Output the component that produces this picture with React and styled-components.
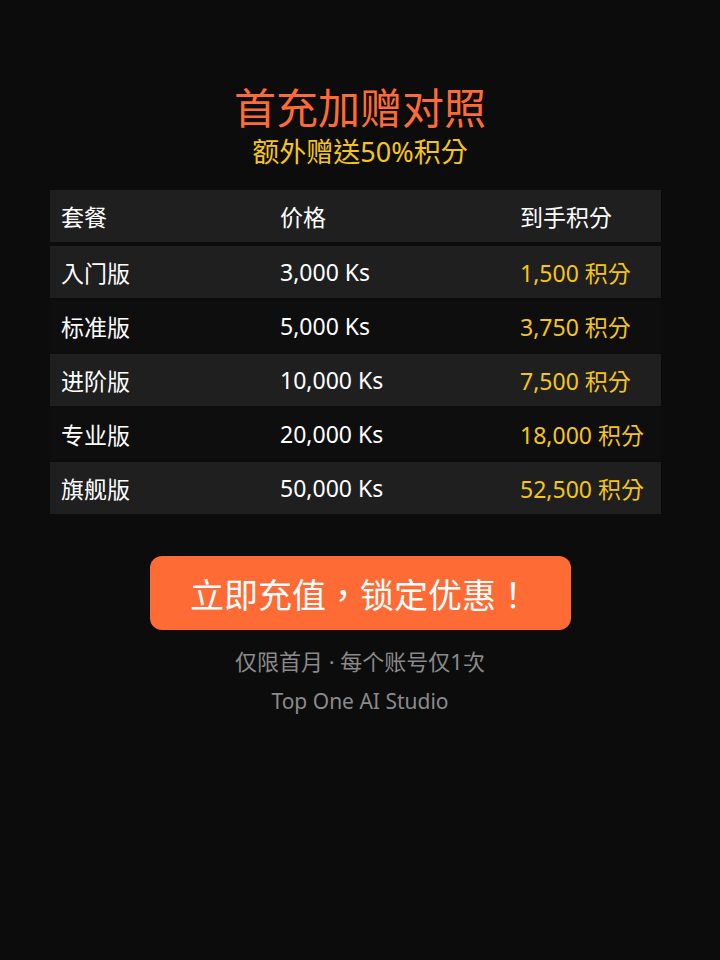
import styled, { createGlobalStyle } from "styled-components";

const GlobalStyle = createGlobalStyle`
  html, body {
    margin: 0;
    padding: 0;
    background: #0c0c0c;
  }
  body {
    font-family: "Noto Sans", "Noto Sans CJK TC", sans-serif;
  }
`;

const Page = styled.div`
  width: 720px;
  min-height: 960px;
  background: #0c0c0c;
  display: flex;
  flex-direction: column;
  align-items: center;
  padding-top: 80px;
  box-sizing: border-box;
`;

const Title = styled.h1`
  margin: 0;
  font-size: 42px;
  font-weight: 400;
  line-height: 56px;
  color: #ff6b35;
`;

const Subtitle = styled.div`
  margin-top: -1px;
  font-size: 27px;
  line-height: 34px;
  color: #f5c518;
`;

const Table = styled.div`
  width: 611px;
  margin: 21px 0 0 -9px;
  display: flex;
  flex-direction: column;
  gap: 2px;
`;

const Row = styled.div`
  display: grid;
  grid-template-columns: 219px 240px 1fr;
  height: 52px;
  align-items: center;
  background: ${(props) => (props.dark ? "#0e0e0e" : "#1f1f1f")};
  margin-bottom: ${(props) => (props.head ? "2px" : "0")};
`;

const Cell = styled.div`
  padding-left: 11px;
  font-size: 23px;
  color: ${(props) => (props.gold ? "#f5c518" : "#ffffff")};
  white-space: nowrap;
`;

const CtaButton = styled.button`
  margin-top: 42px;
  width: 421px;
  height: 74px;
  border: none;
  border-radius: 12px;
  background: #ff6b35;
  color: #ffffff;
  font-family: inherit;
  font-size: 34px;
  cursor: pointer;
`;

const Note = styled.div`
  margin-top: ${(props) => props.top || "0"};
  font-size: ${(props) => props.size || "21px"};
  line-height: 40px;
  color: #8a8a8a;
`;

const plans = [
  { name: "入门版", price: "3,000 Ks", points: "1,500 积分" },
  { name: "标准版", price: "5,000 Ks", points: "3,750 积分" },
  { name: "进阶版", price: "10,000 Ks", points: "7,500 积分" },
  { name: "专业版", price: "20,000 Ks", points: "18,000 积分" },
  { name: "旗舰版", price: "50,000 Ks", points: "52,500 积分" },
];

const App = () => {
  return (
    <>
      <GlobalStyle />
      <Page>
        <Title>首充加赠对照</Title>
        <Subtitle>额外赠送50%积分</Subtitle>
        <Table>
          <Row head>
            <Cell>套餐</Cell>
            <Cell>价格</Cell>
            <Cell>到手积分</Cell>
          </Row>
          {plans.map((plan, i) => (
            <Row key={plan.name} dark={i % 2 === 1}>
              <Cell>{plan.name}</Cell>
              <Cell>{plan.price}</Cell>
              <Cell gold>{plan.points}</Cell>
            </Row>
          ))}
        </Table>
        <CtaButton>立即充值，锁定优惠！</CtaButton>
        <Note top="11px" size="22px">仅限首月 · 每个账号仅1次</Note>
        <Note>Top One AI Studio</Note>
      </Page>
    </>
  );
};

export default App;
